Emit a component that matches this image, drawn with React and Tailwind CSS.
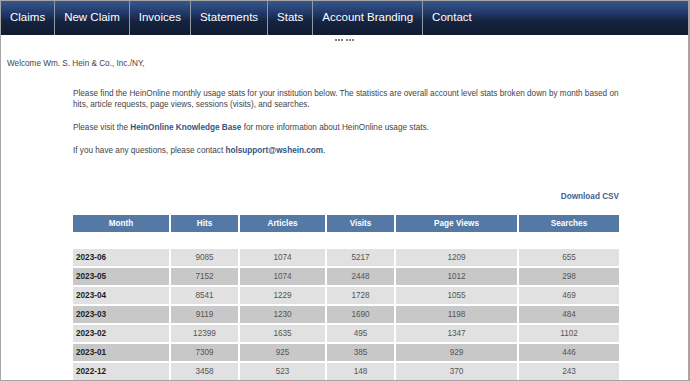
import React from "react";

const nav = ["Claims", "New Claim", "Invoices", "Statements", "Stats", "Account Branding", "Contact"];
const rows = [
  ["2023-06", "9085", "1074", "5217", "1209", "655"],
  ["2023-05", "7152", "1074", "2448", "1012", "298"],
  ["2023-04", "8541", "1229", "1728", "1055", "469"],
  ["2023-03", "9119", "1230", "1690", "1198", "484"],
  ["2023-02", "12399", "1635", "495", "1347", "1102"],
  ["2023-01", "7309", "925", "385", "929", "446"],
  ["2022-12", "3458", "523", "148", "370", "243"],
];
const heads = ["Month", "Hits", "Articles", "Visits", "Page Views", "Searches"];

function Dots() {
  return (
    <div className="flex gap-[1px]">
      <span className="w-[2px] h-[2px] rounded-full bg-[#555]"></span>
      <span className="w-[2px] h-[2px] rounded-full bg-[#555]"></span>
      <span className="w-[2px] h-[2px] rounded-full bg-[#555]"></span>
    </div>
  );
}

export default function App() {
  return (
    <div
      className="w-[690px] h-[381px] overflow-hidden bg-white border-t border-l border-b border-r-2 border-[#a6a6a6]"
      style={{ fontFamily: '"Liberation Sans", Arial, sans-serif' }}
    >
      <div className="h-[34px] flex bg-[linear-gradient(#36578c_0%,#22396a_35%,#15233f_60%,#111b31_100%)]">
        {nav.map((n, i) => (
          <div
            key={n}
            className={`h-full flex items-center px-[9px] text-[11.5px] text-white ${i < nav.length - 1 ? "border-r border-[#8e98a6]" : ""}`}
          >
            {n}
          </div>
        ))}
      </div>
      <div className="flex justify-center items-center gap-[3px] h-[12px] pb-[2px]">
        <Dots />
        <Dots />
      </div>
      <div className="pl-[6px] pt-[11px] text-[8.2px] leading-[11px] text-[#444]">
        Welcome Wm. S. Hein &amp; Co., Inc./NY,
      </div>
      <div className="ml-[72px] w-[550px] mt-[19px] text-[8.2px] leading-[11px] text-[#444]">
        <p>
          Please find the HeinOnline monthly usage stats for your institution below. The statistics are overall account level stats broken down by month based on hits, article requests, page views, sessions (visits), and searches.
        </p>
        <p className="mt-[12px]">
          Please visit the <span className="font-bold text-[#34557f]">HeinOnline Knowledge Base</span> for more information about HeinOnline usage stats.
        </p>
        <p className="mt-[12px]">
          If you have any questions, please contact <span className="font-bold text-[#34557f]">holsupport@wshein.com</span>.
        </p>
        <div className="mt-[35px] w-[546px] text-right font-bold text-[#3f6291]">Download CSV</div>
        <div className="mt-[13px] w-[546px] grid grid-cols-[96px_67px_85px_67px_121px_100px] gap-x-[2px] gap-y-[2px]">
          {heads.map((h) => (
            <div key={h} className="h-[17px] bg-[#5479a4] text-white font-bold flex items-center justify-center">
              {h}
            </div>
          ))}
          <div className="col-span-6 h-[13px]"></div>
          {rows.map((r, ri) =>
            r.map((c, ci) => (
              <div
                key={ri + "-" + ci}
                className={`h-[17px] flex items-center ${ri % 2 === 0 ? "bg-[#e1e1e1]" : "bg-[#c8c8c8]"} ${
                  ci === 0 ? "pl-[3px] font-bold text-[#222]" : "justify-center text-[#555]"
                }`}
              >
                {c}
              </div>
            ))
          )}
        </div>
      </div>
    </div>
  );
}
